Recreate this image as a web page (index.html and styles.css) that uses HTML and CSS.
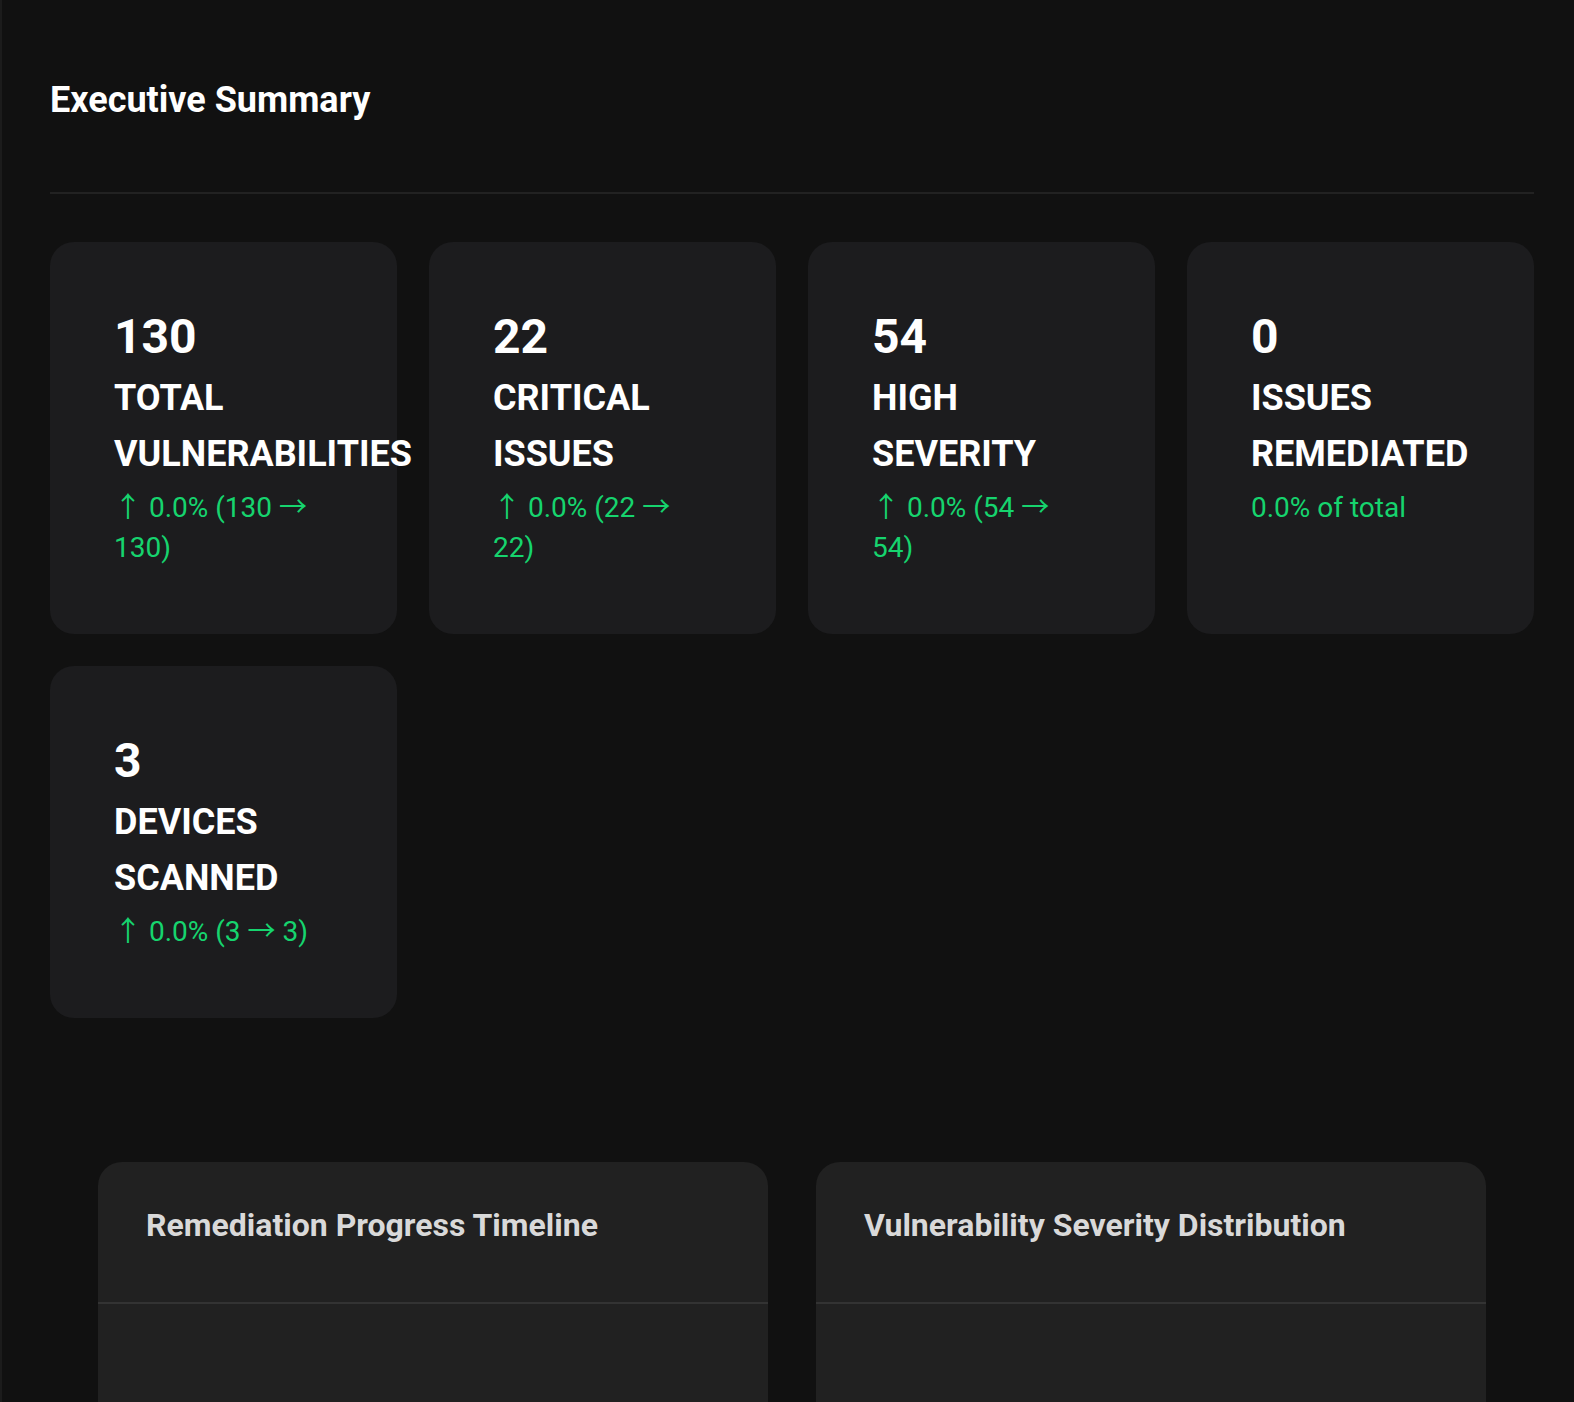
FILE: index.html
```html
<!DOCTYPE html>
<html lang="en">
<head>
    <meta charset="UTF-8">
    <meta name="viewport" content="width=device-width, initial-scale=1.0">
    <title>Executive Summary</title>
    <link rel="stylesheet" href="styles.css">
</head>
<body>
    <div class="page">
        <div class="summary-header">
            <h1>Executive Summary</h1>
        </div>

        <div class="stats-grid">
            <div class="stat-card">
                <div class="stat-value">130</div>
                <div class="stat-label">Total Vulnerabilities</div>
                <div class="stat-change"><span class="arrow">↑</span> 0.0% (130 <span class="arrow">→</span> 130)</div>
            </div>
            <div class="stat-card">
                <div class="stat-value">22</div>
                <div class="stat-label">Critical Issues</div>
                <div class="stat-change"><span class="arrow">↑</span> 0.0% (22 <span class="arrow">→</span> 22)</div>
            </div>
            <div class="stat-card">
                <div class="stat-value">54</div>
                <div class="stat-label">High Severity</div>
                <div class="stat-change"><span class="arrow">↑</span> 0.0% (54 <span class="arrow">→</span> 54)</div>
            </div>
            <div class="stat-card">
                <div class="stat-value">0</div>
                <div class="stat-label">Issues Remediated</div>
                <div class="stat-change">0.0% of total</div>
            </div>
            <div class="stat-card">
                <div class="stat-value">3</div>
                <div class="stat-label">Devices Scanned</div>
                <div class="stat-change"><span class="arrow">↑</span> 0.0% (3 <span class="arrow">→</span> 3)</div>
            </div>
        </div>

        <div class="charts-grid">
            <div class="chart-card">
                <div class="chart-header">
                    <h3>Remediation Progress Timeline</h3>
                </div>
                <div class="chart-body"></div>
            </div>
            <div class="chart-card">
                <div class="chart-header">
                    <h3>Vulnerability Severity Distribution</h3>
                </div>
                <div class="chart-body"></div>
            </div>
        </div>
    </div>
</body>
</html>
```

FILE: styles.css
```css
html, body {
    height: 100%;
    margin: 0;
    padding: 0;
    overflow: hidden;
}

body {
    font-family: Roboto, "Liberation Sans", Arial, sans-serif;
    background-color: #111111;
    border-left: 2px solid #1c1c1c;
    color: #ffffff;
}

.page {
    padding: 79px 40px 0 48px;
}

.summary-header {
    padding-bottom: 71px;
    border-bottom: 2px solid #222222;
}

.summary-header h1 {
    margin: 0;
    font-size: 36px;
    font-weight: 700;
    line-height: normal;
}

.stats-grid {
    display: grid;
    grid-template-columns: repeat(4, minmax(0, 1fr));
    gap: 32px;
    margin-top: 48px;
}

.stat-card {
    background-color: #1c1c1e;
    border-radius: 24px;
    padding: 66px 64px;
}

.stat-value {
    font-size: 48px;
    font-weight: 700;
    line-height: 58px;
    margin-bottom: 4px;
}

.stat-label {
    font-size: 36px;
    font-weight: 700;
    line-height: 56px;
    text-transform: uppercase;
    margin-bottom: 6px;
}

.stat-change {
    font-size: 28px;
    line-height: 40px;
    color: #16d46e;
}

.stat-change .arrow {
    font-family: "Noto Sans CJK JP", sans-serif;
    line-height: 1;
}

.charts-grid {
    display: grid;
    grid-template-columns: 1fr 1fr;
    gap: 48px;
    margin-top: 144px;
    padding: 0 48px;
}

.chart-card {
    background-color: #212121;
    border-radius: 24px;
}

.chart-header {
    padding: 44px 48px 58px;
    border-bottom: 2px solid #333333;
}

.chart-header h3 {
    margin: 0;
    font-size: 32px;
    font-weight: 700;
    line-height: 1.2;
    color: #d9d9d9;
}

.chart-body {
    height: 400px;
}
```
